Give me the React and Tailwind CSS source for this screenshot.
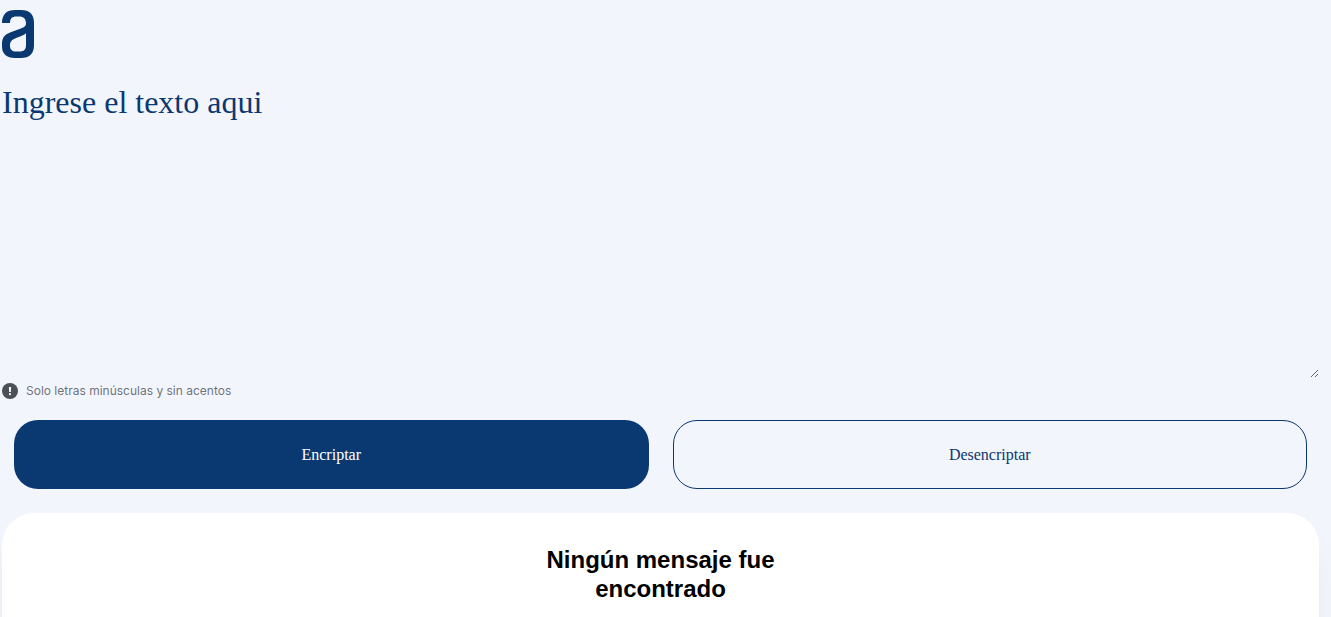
import { useState } from "react";

function Logo() {
  return (
    <svg viewBox="0 0 32 48" className="h-12 w-8" role="img" aria-label="Alura" fill="#0a3871">
      <path
        fillRule="evenodd"
        d="M0 13C0 4.500 4.500 0 13 0H19C27.500 0 32 4.500 32 12.500V35.500C32 43.500 27.500 48 19 48H13C4.500 48 0 43.800 0 36.500V34C0 28 2.500 24.800 8 22.600L19.500 18.300C22.800 17 24 15.800 24 13.500C24 8.700 21.700 6.500 17 6.500H14.500C10 6.500 8 8.500 8 13ZM24 23.300C22.500 24.600 20.500 25.500 18 26.500L13.500 28.300C9.500 30 8 32 8 35.500C8 39.700 10 41.500 14 41.500H17.500C22 41.500 24 39.500 24 35Z"
      />
    </svg>
  );
}

function AlertIcon() {
  return (
    <svg viewBox="0 0 16 16" className="size-4" aria-hidden="true">
      <circle cx="8" cy="8" r="8" fill="#495057" />
      <path d="M6.900 4H9.100L8.900 9H7.100Z" fill="#f3f5fc" />
      <circle cx="8" cy="11.200" r="1.100" fill="#f3f5fc" />
    </svg>
  );
}

export default function App() {
  const [text, setText] = useState("");

  return (
    <div className="min-h-screen overflow-hidden bg-[#f3f5fc] pt-2.5 pr-3 pl-0.5 font-['Liberation_Serif',serif] text-[#0a3871]">
      <header>
        <Logo />
      </header>
      <main>
        <textarea
          aria-label="Ingrese el texto aqui"
          placeholder="Ingrese el texto aqui"
          value={text}
          onChange={(e) => setText(e.target.value)}
          className="mt-6 block h-[296px] w-full resize bg-transparent text-[32px] leading-10 outline-none placeholder:text-[#0a3871]"
        />
        <p className="mt-1 flex h-[18px] items-center gap-2 font-['Inter',sans-serif] text-xs text-[#495057]/80">
          <AlertIcon />
          Solo letras minúsculas y sin acentos
        </p>
        <div className="mt-5 grid grid-cols-2 gap-6 px-3">
          <button type="button" className="h-[69px] rounded-3xl bg-[#0a3871] text-base text-white">
            Encriptar
          </button>
          <button type="button" className="h-[69px] rounded-3xl border border-[#0a3871] text-base">
            Desencriptar
          </button>
        </div>
        <section className="mt-6 flex min-h-64 justify-center rounded-4xl bg-white px-8 pt-8 shadow-[0_24px_32px_-8px_rgba(0,0,0,0.08)]">
          <h2 className="w-72 text-center font-['Liberation_Sans',sans-serif] text-2xl leading-[29px] font-bold text-black">
            Ningún mensaje fue encontrado
          </h2>
        </section>
      </main>
    </div>
  );
}
